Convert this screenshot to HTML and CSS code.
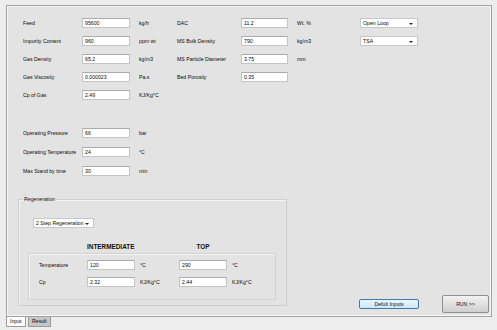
FILE: index.html
```html
<!DOCTYPE html>
<html lang="en">
<head>
  <meta charset="UTF-8" />
  <title>Adsorber Design</title>
  <link rel="stylesheet" href="styles.css">
</head>
<body>
  <div class="page">
    <div class="grid-top">
      <span class="lbl">Feed</span><span class="box">95600</span><span class="unit">kg/h</span>
      <span class="lbl">DAC</span><span class="box">11.2</span><span class="unit">Wt. %</span>
      <span class="combo">Open Loop</span>

      <span class="lbl">Impurity Content</span><span class="box">960</span><span class="unit">ppm wt</span>
      <span class="lbl">MS Bulk Density</span><span class="box">790</span><span class="unit">kg/m3</span>
      <span class="combo">TSA</span>

      <span class="lbl">Gas Density</span><span class="box">65.2</span><span class="unit">kg/m3</span>
      <span class="lbl">MS Particle Diameter</span><span class="box">3.75</span><span class="unit">mm</span>
      <span></span>

      <span class="lbl">Gas Viscosity</span><span class="box">0.000023</span><span class="unit">Pa.s</span>
      <span class="lbl">Bed Porosity</span><span class="box">0.35</span><span class="unit"></span>
      <span></span>

      <span class="lbl">Cp of Gas</span><span class="box">2.49</span><span class="unit">KJ/Kg°C</span>
      <span></span><span></span><span></span><span></span>
    </div>

    <div class="grid-op">
      <span class="lbl">Operating Pressure</span><span class="box">66</span><span class="unit">bar</span>
      <span class="lbl">Operating Temperature</span><span class="box">24</span><span class="unit">°C</span>
      <span class="lbl">Max Stand by time</span><span class="box">30</span><span class="unit">min</span>
    </div>

    <div class="bottom">
      <fieldset class="regen">
        <legend>Regeneration</legend>
        <span class="combo combo-regen">2 Step Regeneration</span>
        <div class="heads">
          <span></span><span class="head">INTERMEDIATE</span><span></span><span class="head head-top">TOP</span>
        </div>
        <div class="steps">
          <span class="lbl">Temperature</span><span class="box">120</span><span class="unit">°C</span>
          <span class="box">290</span><span class="unit">°C</span>
          <span class="lbl">Cp</span><span class="box">2.32</span><span class="unit">KJ/Kg°C</span>
          <span class="box">2.44</span><span class="unit">KJ/Kg°C</span>
        </div>
      </fieldset>

      <div class="actions">
        <button class="btn btn-default">Defult Inputs</button>
        <button class="btn btn-run">RUN &gt;&gt;</button>
      </div>
    </div>
  </div>

  <div class="tabs">
    <span class="tab tab-active">Input</span>
    <span class="tab">Result</span>
  </div>
</body>
</html>
```

FILE: styles.css
```css
body {
  margin: 0;
  background: #ededed;
  font-family: "Liberation Sans", Arial, sans-serif;
  font-size: 5.2px;
  color: #0a0a0a;
  width: 497px;
  height: 330px;
  overflow: hidden;
}

.page {
  box-sizing: border-box;
  margin: 5px 0 0 6px;
  width: 486px;
  height: 312px;
  background: #e3e3e3;
  border: 1px solid #a2a2a2;
  box-shadow: inset -1px -1px 0 #f7f7f7, inset 1px 1px 0 #f7f7f7;
  padding: 8px 2px 0 11px;
}

.grid-top {
  display: grid;
  margin-left: 5px;
  grid-template-columns: 59px 48px 47px 64px 47px 72px 58px;
  grid-auto-rows: 18px;
  align-items: center;
}

.grid-op {
  display: grid;
  margin: 19px 0 0 5px;
  grid-template-columns: 59px 48px 40px;
  grid-auto-rows: 19px;
  align-items: center;
}

.lbl {
  white-space: nowrap;
}

.unit {
  padding-left: 9px;
  white-space: nowrap;
}

.box {
  box-sizing: border-box;
  height: 10px;
  line-height: 9px;
  background: #fff;
  border: 1px solid #c4c4c4;
  border-top-color: #ababab;
  padding-left: 2px;
}

.combo {
  box-sizing: border-box;
  position: relative;
  height: 10px;
  line-height: 9px;
  background: #fff;
  border: 1px solid #c8c8c8;
  padding-left: 2px;
}

.combo::after {
  content: "";
  position: absolute;
  right: 4px;
  top: 4px;
  border-left: 2px solid transparent;
  border-right: 2px solid transparent;
  border-top: 2px solid #222;
}

.bottom {
  display: flex;
  align-items: flex-start;
  margin-top: 16px;
}

.regen {
  box-sizing: border-box;
  margin: 0;
  width: 261px;
  height: 110px;
  border: 1px solid #cdcdcd;
  box-shadow: inset 1px 1px 0 #f4f4f4;
  padding: 15px 10px 4px 9px;
}

.regen legend {
  padding: 0 1px;
  margin-left: -5px;
  line-height: 7px;
}

.combo-regen {
  display: block;
  width: 61px;
  margin-left: 5px;
}

.heads,
.steps {
  display: grid;
  grid-template-columns: 48px 48px 44px 48px 48px;
  align-items: center;
}

.heads {
  margin-top: 14px;
  padding-left: 11px;
  height: 8px;
}

.head {
  font-weight: bold;
  font-size: 6.4px;
  color: #111;
  white-space: nowrap;
}

.head-top {
  text-align: center;
}

.steps {
  margin-top: 3px;
  height: 47px;
  box-sizing: border-box;
  border: 1px solid #d2d2d2;
  box-shadow: inset 1px 1px 0 #f4f4f4;
  padding: 2px 0 10px 10px;
  grid-auto-rows: 17px;
  align-content: start;
}

.steps .unit {
  padding-left: 5px;
}

.actions {
  display: flex;
  align-items: center;
  margin: 99px 0 0 auto;
  gap: 23px;
}

.btn {
  box-sizing: border-box;
  font-family: inherit;
  font-size: 5.2px;
  color: #111;
  padding: 0;
  border-radius: 2px;
  cursor: pointer;
}

.btn-default {
  width: 60px;
  height: 10px;
  border: 1px solid #3d7bad;
  background: linear-gradient(#eaf6fd, #cfe6f5);
}

.btn-run {
  width: 47px;
  height: 18px;
  border: 1px solid #8f8f8f;
  background: linear-gradient(#f2f2f2, #cfcfcf);
}

.tabs {
  display: flex;
  gap: 2px;
  margin-left: 6px;
}

.tab {
  box-sizing: border-box;
  height: 10px;
  line-height: 9px;
  padding: 0 3px;
  border: 1px solid #9a9a9a;
  border-top: none;
  background: #c6c6c6;
}

.tab-active {
  width: 20px;
  background: #fff;
}
```
